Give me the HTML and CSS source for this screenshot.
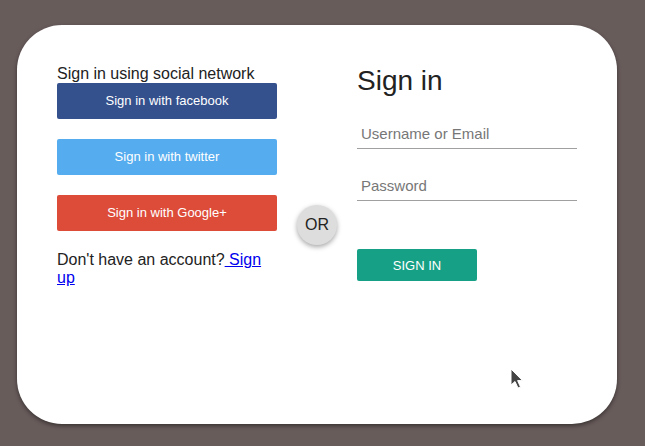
FILE: index.html
```html
<!DOCTYPE html>
<html lang="en">
<head>
<meta charset="utf-8">
<title>Sign in</title>
<link rel="stylesheet" href="styles.css">
</head>
<body>
<div class="card">
  <div class="col social">
    <div class="social-title">Sign in using social network</div>
    <a class="btn-social fb">Sign in with facebook</a>
    <a class="btn-social tw">Sign in with twitter</a>
    <a class="btn-social gp">Sign in with Google+</a>
    <p class="signup">Don't have an account?<a href="#"> Sign up</a></p>
  </div>
  <div class="divider">
    <div class="or">OR</div>
  </div>
  <div class="col form">
    <h1 class="title">Sign in</h1>
    <input class="field" type="text" placeholder="Username or Email">
    <input class="field" type="password" placeholder="Password">
    <button class="btn-submit">SIGN IN</button>
  </div>
</div>
<svg class="cursor" width="14" height="22" viewBox="0 0 14 22">
  <path d="M1 1 L1 17 L5 13.5 L8 20 L10.5 19 L7.6 12.6 L12.5 12.6 Z" fill="#444" stroke="#fff" stroke-width="1"/>
</svg>
</body>
</html>
```
FILE: styles.css
```css
html, body {
  margin: 0;
  padding: 0;
}
body {
  background: #685c5b;
  font-family: "Liberation Sans", Arial, sans-serif;
  padding: 25px 0 0 17px;
  height: 446px;
  box-sizing: border-box;
  overflow: hidden;
}
.card {
  width: 600px;
  height: 399px;
  box-sizing: border-box;
  background: #fff;
  border-radius: 45px;
  box-shadow: 0 2px 4px rgba(0, 0, 0, 0.45);
  padding: 40px;
  display: flex;
  align-items: flex-start;
}
.col {
  width: 220px;
  display: flex;
  flex-direction: column;
}
.social-title {
  font-size: 16px;
  line-height: 18px;
  color: #222;
}
.btn-social {
  display: block;
  height: 36px;
  line-height: 36px;
  text-align: center;
  color: #fff;
  font-size: 13px;
  border-radius: 2px;
  margin-bottom: 20px;
  cursor: pointer;
}
.fb { background: #34518d; }
.tw { background: #55acee; }
.gp { background: #dd4b39; }
.signup {
  margin: 0;
  font-size: 16px;
  line-height: 18px;
  color: #222;
}
.signup a {
  color: #0000ee;
  text-decoration: underline;
}
.divider {
  width: 80px;
  align-self: stretch;
  display: flex;
  align-items: center;
  justify-content: center;
}
.or {
  width: 40px;
  height: 40px;
  border-radius: 50%;
  background: #dddddd;
  box-shadow: 0 2px 5px rgba(0, 0, 0, 0.35);
  display: flex;
  align-items: center;
  justify-content: center;
  font-size: 16px;
  color: #222;
}
.title {
  margin: 0;
  font-size: 28px;
  line-height: 32px;
  font-weight: normal;
  color: #222;
}
.field {
  display: block;
  width: 220px;
  height: 31px;
  box-sizing: border-box;
  margin: 21px 0 0;
  padding: 0 4px;
  border: none;
  border-bottom: 1px solid #a0a0a0;
  outline: none;
  font-family: "Liberation Sans", Arial, sans-serif;
  font-size: 15px;
  color: #222;
  background: transparent;
}
.field::placeholder {
  color: #777;
}
.btn-submit {
  margin-top: 48px;
  width: 120px;
  height: 32px;
  border: none;
  border-radius: 2px;
  background: #16a085;
  color: #fff;
  font-family: "Liberation Sans", Arial, sans-serif;
  font-size: 13px;
  padding: 0;
}
.cursor {
  position: absolute;
  left: 510px;
  top: 368px;
}
```
